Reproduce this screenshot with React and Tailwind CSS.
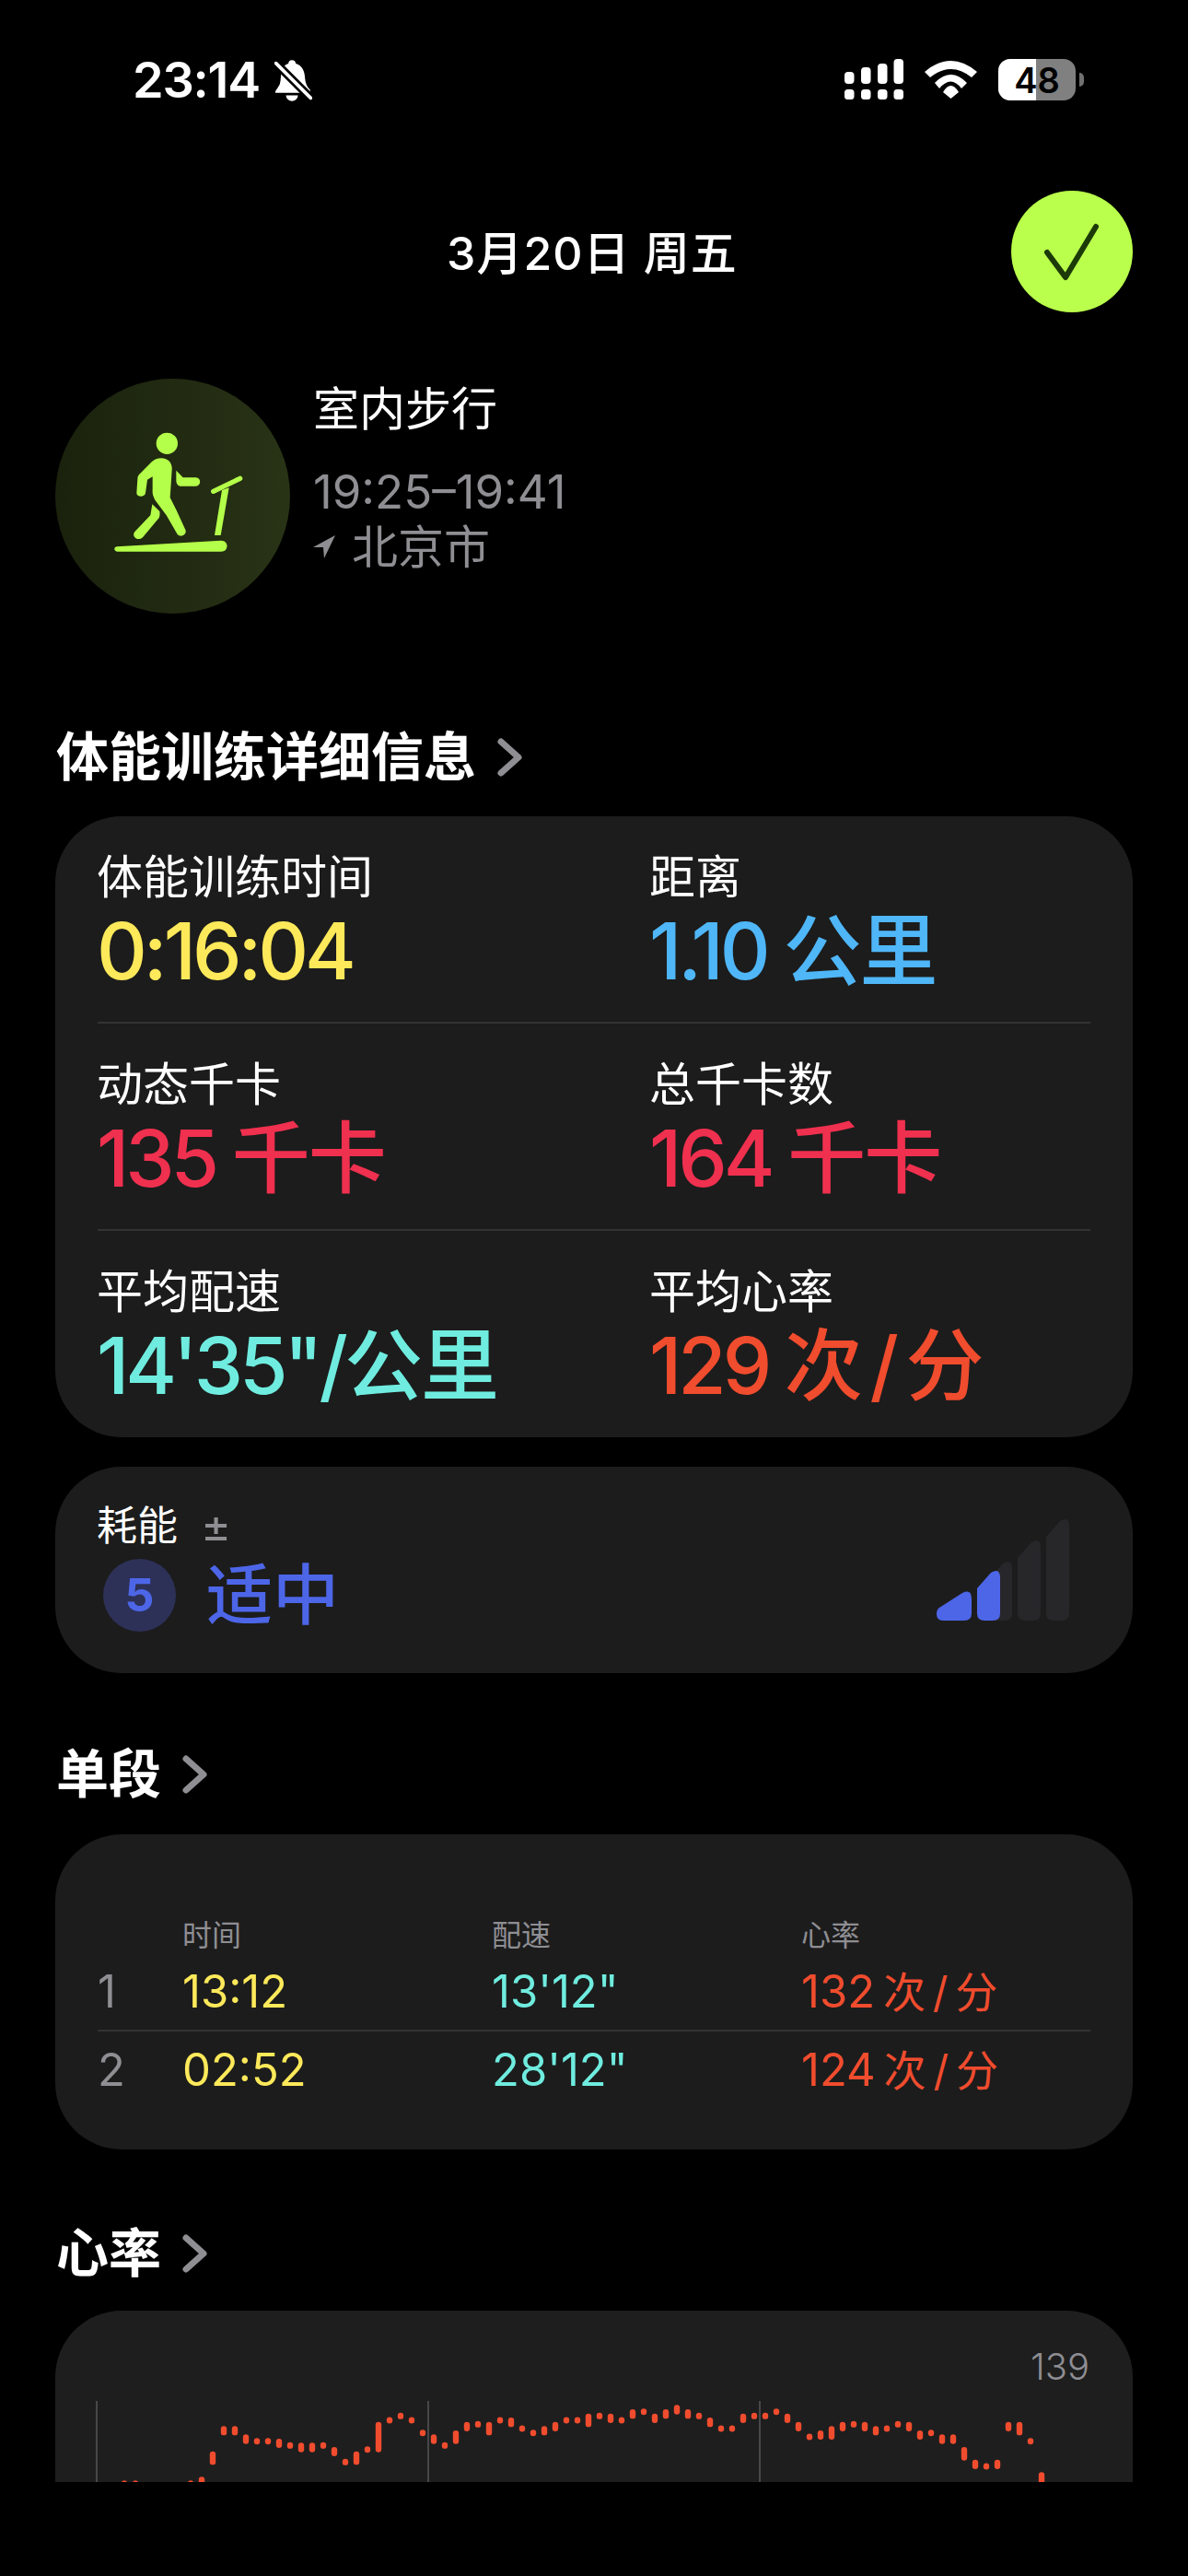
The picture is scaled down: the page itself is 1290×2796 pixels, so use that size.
const cjk = "font-['Inter','Noto_Sans_CJK_SC',sans-serif]"

// chart samples: [bar top, bar bottom] as y offsets measured from 2480, at 3 units per px
const hrPoints = [
  [637, 660], [637, 660], null, null, null, null, [637, 660], [625, 660],
  [542, 586], [460, 490], [460, 490], [487, 518], [509], [509], [501, 531], [523],
  [514, 545], [514, 545], [523], [528, 558], [577], [542, 586], [536], [446, 545],
  [441], [427], [441], [482], [487, 518], [523], [474, 518], [446, 477],
  [454], [446, 490], [441], [432, 463], [468], [482], [460, 490], [446, 477],
  [441], [441], [419, 463], [427], [419, 450], [441], [405, 436], [413],
  [419, 450], [405, 436], [391, 422], [405, 436], [427], [432, 463], [468], [468],
  [419, 450], [427], [427], [413], [419, 450], [446, 477], [495], [474, 504],
  [460, 504], [446, 477], [454], [446, 477], [460, 490], [468], [454], [446, 477],
  [474, 504], [482], [487, 518], [487, 518], [528, 572], [569, 600], [591], [569, 600],
  [446, 477], [446, 490], [509], [610, 660],
]

function StatusBar() {
  return (
    <div className="h-[170px] pt-[60px] pl-[144px] pr-[113px] flex justify-between items-start">
      <div className="flex items-center gap-[16px] h-[54px]">
        <span className="text-[54px] leading-[54px] font-semibold text-white tracking-[-1.2px] font-['Inter',sans-serif]">23:14</span>
        <svg width="41" height="45" viewBox="0 0 125 135" className="fill-white">
          <path d="M58 0C66 0 70 5 71 11C92 18 100 36 101 58C102 76 108 88 118 98L118 108H3C2 100 12 92 18 78C22 64 20 50 24 36C28 22 36 14 46 11C47 5 50 0 58 0Z" />
          <path d="M38 116H78C76 128 68 135 58 135C48 135 40 128 38 116Z" />
          <path d="M5 10L120 125" stroke="#000" strokeWidth="28" />
          <path d="M5 10L120 125" stroke="#fff" strokeWidth="11" strokeLinecap="round" />
        </svg>
      </div>
      <div className="flex items-start gap-[23px] mt-[4px]">
        <svg width="64" height="44" viewBox="0 0 64 44" className="fill-white">
          <rect x="0" y="14" width="10.5" height="13" rx="4" />
          <rect x="18" y="9" width="10.5" height="18" rx="4" />
          <rect x="36" y="5" width="10.5" height="22" rx="4" />
          <rect x="53.5" y="0" width="10.5" height="27" rx="4" />
          <rect x="0" y="33" width="10.5" height="11" rx="3.5" />
          <rect x="18" y="33" width="10.5" height="11" rx="3.5" />
          <rect x="36" y="33" width="10.5" height="11" rx="3.5" />
          <rect x="53.5" y="33" width="10.5" height="11" rx="3.5" />
        </svg>
        <svg width="57" height="41" viewBox="0 0 57 41" className="fill-white mt-[2px]">
          <path d="M0 12Q28.5 -12 57 12L51 18Q28.5 0 6 18Z" />
          <path d="M11 24Q28.5 6 46 24L40 30Q28.5 15 16 30Z" />
          <path d="M20 34Q28.5 20 37 34L28.5 41Z" />
        </svg>
        <div className="flex items-center gap-[4px]">
          <div className="relative w-[84px] h-[45px] rounded-[13px] overflow-hidden bg-[#808080] flex items-center justify-center">
            <div className="absolute left-0 top-0 bottom-0 w-[41px] bg-white" />
            <span className="relative text-[38px] leading-none font-semibold text-black font-['Inter',sans-serif]">48</span>
          </div>
          <div className="w-[5px] h-[15px] rounded-r-full bg-[#707070]" />
        </div>
      </div>
    </div>
  )
}

function Header() {
  return (
    <div className="relative h-[131px] mt-[37px] flex items-center justify-center">
      <span className={`${cjk} text-[50px] font-medium text-white tracking-[1px] mr-[4px] mt-[6px]`}>3月20日 周五</span>
      <div className="absolute right-[60px] top-0 w-[132px] h-[132px] rounded-full bg-[#b9ff4b] flex items-center justify-center">
        <svg width="70" height="70" viewBox="0 0 70 70" fill="none">
          <path d="M8 36l20 27L61 8" stroke="#1c3a08" strokeWidth="6" strokeLinecap="round" strokeLinejoin="round" />
        </svg>
      </div>
    </div>
  )
}

function TreadmillBadge() {
  return (
    <div className="w-[255px] h-[255px] rounded-full bg-linear-to-r from-[#1a220d] to-[#293316] shrink-0">
      <svg width="255" height="255" viewBox="0 33 765 765" className="fill-[#b4ff4a]">
        <circle cx="364" cy="244" r="35" />
        <path d="M345 292C370 292 382 310 380 330L374 420L395 462L424 525C430 540 410 552 398 540L362 478L325 428C318 415 316 405 317 395L317 352L300 362L294 405C292 420 265 420 265 405L268 360C268 350 272 345 280 338L315 303C325 295 335 292 345 292Z" />
        <path d="M316 442L340 465C342 480 338 488 335 490L285 550C270 565 245 545 260 530L310 478Z" />
        <path d="M394 332L416 355L458 355C476 355 476 383 458 383L410 383C400 383 394 375 394 365Z" />
        <path d="M200 580L540 560C566 560 566 596 540 596L203 596C190 596 190 582 200 580Z" />
        <path d="M515 400L602 358" stroke="#b4ff4a" strokeWidth="16" strokeLinecap="round" />
        <path d="M543 396L566 388L539 543L519 543Z" />
      </svg>
    </div>
  )
}

function WorkoutTitle() {
  return (
    <div className="flex items-start gap-[25px] pl-[60px] mt-[73px]">
      <TreadmillBadge />
      <div className={cjk}>
        <div className="text-[50px] leading-[66px] text-white">室内步行</div>
        <div className="text-[51px] leading-[60px] text-[#8e8e93] mt-[27px]">19:25–19:41</div>
        <div className="flex items-center gap-[18px] text-[50px] leading-[60px] text-[#8e8e93]">
          <svg width="24" height="26" viewBox="0 0 24 26" className="fill-[#8e8e93]">
            <path d="M24 0L0 13L11 13L12 25Z" />
          </svg>
          北京市
        </div>
      </div>
    </div>
  )
}

function SectionTitle({ children, className }) {
  return (
    <div className={`${cjk} flex items-center gap-[22px] pl-[61px] ${className}`}>
      <span className="text-[57px] leading-[70px] font-bold text-white">{children}</span>
      <svg width="30" height="44" viewBox="0 0 30 44" fill="none" stroke="#8e8e93" strokeWidth="7" strokeLinecap="round" strokeLinejoin="round">
        <path d="M5 5L24 22L5 39" />
      </svg>
    </div>
  )
}

// numbers run tighter than the chinese unit in the reference
function Metric({ label, value, unit, color, wide }) {
  return (
    <div className={`-translate-x-[1px] ${wide ? 'w-[600px]' : ''}`}>
      <div className="text-[50px] leading-[60px] text-white">{label}</div>
      <div className={`text-[85px] leading-[96px] mt-[3px] font-medium whitespace-nowrap tracking-[-4px] [word-spacing:-1px] ${color}`}>
        {value}
        {unit && <span className="tracking-[-2px] [word-spacing:-11px]">{unit}</span>}
      </div>
    </div>
  )
}

function MetricsCard() {
  const rows = [
    [
      { label: '体能训练时间', value: '0:16:04', color: 'text-[#fde95a]' },
      { label: '距离', value: '1.10 ', unit: '公里', color: 'text-[#4fb6f8]' },
    ],
    [
      { label: '动态千卡', value: '135 ', unit: '千卡', color: 'text-[#f0304f]' },
      { label: '总千卡数', value: '164 ', unit: '千卡', color: 'text-[#f0304f]' },
    ],
    [
      { label: '平均配速', value: '14\'35"/', unit: '公里', color: 'text-[#6fecdf]' },
      { label: '平均心率', value: '129 ', unit: '次 / 分', color: 'text-[#f04c2e]' },
    ],
  ]
  return (
    <div className={`${cjk} mx-[60px] mt-[29px] h-[674px] rounded-[72px] bg-[#1c1c1c] px-[46px]`}>
      {rows.map((row, i) => (
        <div key={i} className={`flex h-[225px] pt-[36px] ${i < 2 ? 'border-b-2 border-[#333333]' : ''}`}>
          <Metric {...row[0]} wide />
          <Metric {...row[1]} />
        </div>
      ))}
    </div>
  )
}

function EffortBars() {
  const slanted = (x, top) => `M${x} ${top + 20}L${x + 15} ${top + 3}Q${x + 25} ${top - 3} ${x + 25} ${top + 9}V103Q${x + 25} 111 ${x + 17} 111H${x + 8}Q${x} 111 ${x} 103Z`
  return (
    <svg width="144" height="111" viewBox="0 0 144 111" className="mt-[22px]">
      <path d={slanted(57, 46)} fill="#27272a" />
      <path d={slanted(88, 23)} fill="#27272a" />
      <path d={slanted(119, 0)} fill="#27272a" />
      <path d="M3 97L28 81Q38 76 38 88V103Q38 111 30 111H7Q0 111 0 104Q0 99 3 97Z" fill="#4d66e8" />
      <path d={slanted(44, 56)} fill="#4d66e8" />
    </svg>
  )
}

function EffortCard() {
  return (
    <div className={`${cjk} mx-[60px] mt-[32px] h-[224px] rounded-[72px] bg-[#1c1c1c] pl-[45px] pr-[69px] pt-[34px] flex justify-between`}>
      <div>
        <div className="flex items-center gap-[25px]">
          <span className="text-[44px] leading-[60px] text-white">耗能</span>
          <span className="text-[50px] leading-[40px] text-[#8e8e93]">±</span>
        </div>
        <div className="flex items-center gap-[33px] pl-[7px]">
          <div className="w-[79px] h-[79px] rounded-full bg-[#2d3158] flex items-center justify-center text-[50px] font-bold text-[#4d66e8]">5</div>
          <span className="text-[72px] leading-[90px] font-medium text-[#4d66e8]">适中</span>
        </div>
      </div>
      <EffortBars />
    </div>
  )
}

function SplitsCard() {
  const splits = [
    ['1', '13:12', "13'12\"", '132', '次 / 分'],
    ['2', '02:52', "28'12\"", '124', '次 / 分'],
  ]
  return (
    <div className={`${cjk} mx-[60px] mt-[30px] h-[342px] rounded-[72px] bg-[#1c1c1c] px-[46px] pt-[89px]`}>
      <div className="flex text-[32px] leading-[41px] text-[#8e8e93]">
        <span className="w-[92px]" />
        <span className="w-[336px]">时间</span>
        <span className="w-[336px]">配速</span>
        <span>心率</span>
      </div>
      {splits.map((s, i) => (
        <div key={s[0]} className={`flex items-center h-[84px] text-[49px] ${i === 0 ? 'border-b-2 border-[#333333]' : ''}`}>
          <span className="w-[92px] text-[#8e8e93]">{s[0]}</span>
          <span className="w-[336px] text-[#fde95a]">{s[1]}</span>
          <span className="w-[336px] text-[#6fecdf]">{s[2]}</span>
          <span className="text-[#f04c2e] whitespace-nowrap [word-spacing:-5px]">
            {s[3]} <span className="text-[46px]">{s[4]}</span>
          </span>
        </div>
      ))}
    </div>
  )
}

function HeartRateCard() {
  return (
    <div className="relative mx-[60px] mt-[27px] h-[186px] rounded-t-[72px] bg-[#1e1e1e] overflow-hidden">
      <div className="absolute right-[47px] top-[38px] text-[40px] leading-[46px] font-light text-[#8e8e93] font-['Inter',sans-serif]">139</div>
      <svg width="1170" height="186" viewBox="60 2508 1170 186" className="block">
        {[105, 465, 825].map((x) => (
          <rect key={x} x={x - 1} y="2606" width="2" height="90" fill="#48484a" />
        ))}
        {hrPoints.map((p, i) => {
          if (!p) return null
          const x = 135 + i * 12 - 3.2
          const cy = (z) => 2480 + z / 3
          const top = p.length === 1 ? cy(p[0]) - 3.5 : cy(p[0])
          const h = p.length === 1 ? 7 : (p[1] - p[0]) / 3
          return <rect key={i} x={x} y={top} width="6.4" height={h} rx="3.2" fill="#f04c2e" />
        })}
      </svg>
    </div>
  )
}

export default function App() {
  return (
    <div className="w-[1290px] h-[2796px] bg-black overflow-hidden">
      <div className="h-[2694px] overflow-hidden">
        <StatusBar />
        <Header />
        <WorkoutTitle />
        <SectionTitle className="mt-[121px]">体能训练详细信息</SectionTitle>
        <MetricsCard />
        <EffortCard />
        <SectionTitle className="mt-[75px]">单段</SectionTitle>
        <SplitsCard />
        <SectionTitle className="mt-[78px]">心率</SectionTitle>
        <HeartRateCard />
      </div>
    </div>
  )
}
